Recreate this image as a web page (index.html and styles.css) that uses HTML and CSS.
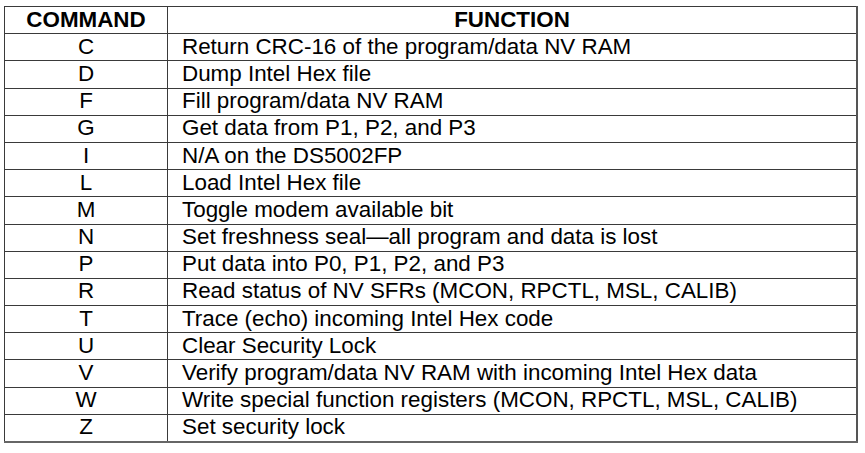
FILE: index.html
```html
<!DOCTYPE html>
<html>
<head>
<meta charset="utf-8">
<link rel="stylesheet" href="styles.css">
</head>
<body>
<table class="cmd-table">
  <colgroup><col class="c1"><col class="c2"></colgroup>
  <thead>
    <tr><th>COMMAND</th><th>FUNCTION</th></tr>
  </thead>
  <tbody>
    <tr><td class="cmd">C</td><td class="fn">Return CRC-16 of the program/data NV RAM</td></tr>
    <tr><td class="cmd">D</td><td class="fn">Dump Intel Hex file</td></tr>
    <tr><td class="cmd">F</td><td class="fn">Fill program/data NV RAM</td></tr>
    <tr><td class="cmd">G</td><td class="fn">Get data from P1, P2, and P3</td></tr>
    <tr><td class="cmd">I</td><td class="fn">N/A on the DS5002FP</td></tr>
    <tr><td class="cmd">L</td><td class="fn">Load Intel Hex file</td></tr>
    <tr><td class="cmd">M</td><td class="fn">Toggle modem available bit</td></tr>
    <tr><td class="cmd">N</td><td class="fn">Set freshness seal—all program and data is lost</td></tr>
    <tr><td class="cmd">P</td><td class="fn">Put data into P0, P1, P2, and P3</td></tr>
    <tr><td class="cmd">R</td><td class="fn">Read status of NV SFRs (MCON, RPCTL, MSL, CALIB)</td></tr>
    <tr><td class="cmd">T</td><td class="fn">Trace (echo) incoming Intel Hex code</td></tr>
    <tr><td class="cmd">U</td><td class="fn">Clear Security Lock</td></tr>
    <tr><td class="cmd">V</td><td class="fn">Verify program/data NV RAM with incoming Intel Hex data</td></tr>
    <tr><td class="cmd">W</td><td class="fn">Write special function registers (MCON, RPCTL, MSL, CALIB)</td></tr>
    <tr><td class="cmd">Z</td><td class="fn">Set security lock</td></tr>
  </tbody>
</table>
</body>
</html>
```
FILE: styles.css
```css
html, body {
  margin: 0;
  padding: 0;
  background: #fff;
}
body {
  padding: 6px 0 0 4px;
  font-family: "Liberation Sans", Arial, sans-serif;
  color: #000;
}
.cmd-table {
  border-collapse: collapse;
  width: 854px;
  table-layout: fixed;
  font-size: 22.4px;
  border-right: 2px solid #555;
  border-bottom: 2px solid #666;
}
.c1 { width: 163px; }
.cmd-table tr {
  height: 27.2px;
}
.cmd-table th,
.cmd-table td {
  border: 1px solid #3a3a3a;
  padding: 1px 0 2px 0;
  line-height: 20px;
  vertical-align: middle;
  white-space: nowrap;
}
.cmd-table th {
  font-weight: bold;
  text-align: center;
}
.cmd {
  text-align: center;
}
.fn {
  text-align: left;
  padding-left: 14px !important;
}
```
